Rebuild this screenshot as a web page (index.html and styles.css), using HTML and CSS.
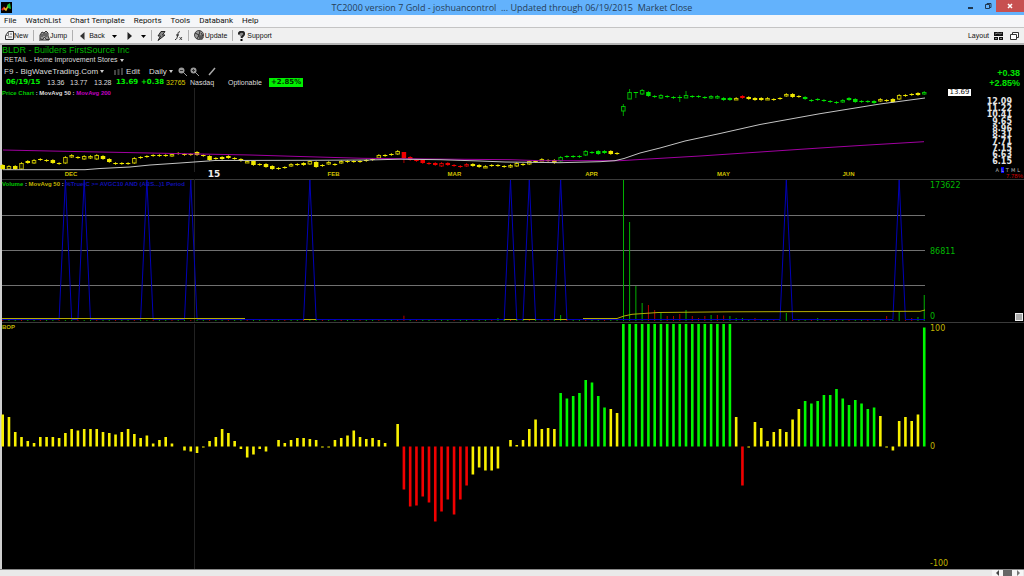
FILE: index.html
```html
<!DOCTYPE html>
<html lang="en">
<head>
<meta charset="utf-8">
<title>TC2000 version 7 Gold</title>
<link rel="stylesheet" href="styles.css">
</head>
<body>
<div class="app">
  <header class="titlebar">
    <svg class="app-icon" viewBox="0 0 11 11"><path fill="#000" d="M0 0h11v11H0z"/><path stroke="#e02020" stroke-width="2" fill="none" d="M1 8l2-2 2 2"/><path stroke="#e0c020" stroke-width="1.5" fill="none" d="M3 6l2 2 2-4"/><path fill="#18c030" d="M6 3l3-2 1 6-3-1z"/></svg>
    <h1 class="title">TC2000 version 7 Gold - joshuancontrol&nbsp; ... Updated through 06/19/2015&nbsp; Market Close</h1>
    <div class="window-buttons">
      <button class="win" aria-label="Minimize"><svg viewBox="0 0 8 8"><path fill="#203850" d="M1 5h5v2H1z"/></svg></button>
      <button class="win" aria-label="Restore"><svg viewBox="0 0 8 8" fill="none" stroke="#203850"><path d="M1.5 2.500h4v4h-4zM3 2.500v-1h4v4H6"/></svg></button>
      <button class="win close" aria-label="Close"><svg viewBox="0 0 8 8"><path stroke="#fff" stroke-width="1.500" d="M2 2l4 4M6 2L2 6"/></svg></button>
    </div>
  </header>
  <nav class="menu">
    <button>File</button><button>WatchList</button><button>Chart Template</button><button>Reports</button><button>Tools</button><button>Databank</button><button>Help</button>
  </nav>
  <div class="toolbar">
    <button class="tool"><svg class="i9" viewBox="0 0 9 10" fill="none" stroke="#333"><path d="M3.500.5h5v8h-8v-4z"/><path d="M3.500.5v4h-3M3 6h4M5 3h2" stroke="#777"/></svg>New</button>
    <i class="sep"></i>
    <button class="tool"><svg class="i11" viewBox="0 0 11 11" fill="none" stroke="#333"><path fill="#999" d="M1 9V5l2-3 2 1 2-2 2 2v3l1.500 3.500H7L5.500 7 4 9.500z"/><path d="M3 4v3M5 3v3M7 3v4M0 10h10"/></svg>Jump</button>
    <i class="sep"></i>
    <button class="tool back"><svg class="i5" viewBox="0 0 5 8"><path d="M4.500 0v8L0 4z" fill="#333"/></svg>Back</button>
    <button class="tool drop" aria-label="Back history"><svg class="i5" viewBox="0 0 5 8"><path d="M0 3h5L2.500 6z"/></svg></button>
    <button class="tool fwd" aria-label="Forward"><svg class="i5" viewBox="0 0 5 8"><path d="M.5 0v8L5 4z" fill="#222"/></svg></button>
    <button class="tool drop2" aria-label="Forward history"><svg class="i5" viewBox="0 0 5 8"><path d="M0 3h5L2.500 6z"/></svg></button>
    <i class="sep"></i>
    <button class="tool" aria-label="Quick alert"><svg class="i9" viewBox="0 0 9 10"><path d="M4 .5h4L5.500 4H8L1 9.500 3.500 5H1z" fill="#888" stroke="#222"/></svg></button>
    <button class="tool fx" aria-label="Formula"><svg class="i9" viewBox="0 0 9 10" fill="none" stroke="#222"><path d="M6 1C4 0 4 3 3.500 5S2.500 9 1 8.500M2 4h3"/><path d="M5.500 6l2.500 3M8 6L5.500 9" stroke-width=".8"/></svg></button>
    <i class="sep"></i>
    <button class="tool"><svg class="i11" viewBox="0 0 11 11"><circle cx="5" cy="5" r="4.500" fill="#999" stroke="#444"/><path d="M1 3l4 2 1-4M5 5L3 9M4 6h5M7 3l2 3" stroke="#333" fill="none"/><path d="M5 6l5 1-2 3-3-1z" fill="#555"/></svg>Update</button>
    <i class="sep"></i>
    <button class="tool"><svg class="i7" viewBox="0 0 7 10"><path d="M1 3.500C0 0 7-.5 6 3.500 5.500 5 4 5 3.500 7" stroke="#222" stroke-width="2" fill="#888"/><path d="M2.500 8h2v2h-2z"/></svg>Support</button>
    <span class="spacer"></span>
    <button class="tool layout">Layout <svg class="i9" viewBox="0 0 9 10"><path fill="#111" d="M0 1h9v4H0zM0 6h4v3H0zM5 6h4v3H5z"/><path stroke="#ccc" stroke-width=".6" d="M1 3l3-1 2 1 2-1M1 7.500h2M6 7.500h2" fill="none"/></svg></button>
    <button class="tool" aria-label="Windows"><svg class="i9" viewBox="0 0 9 10" fill="#fff" stroke="#333"><path d="M2.500 1.500h6v5h-6z"/><path d="M.5 3.500h6v5h-6z"/></svg></button>
  </div>
  <main class="workspace">
    <section class="header">
      <div class="info">
        <h2 class="symbol">BLDR - Builders FirstSource Inc</h2>
        <button class="industry">RETAIL - Home Improvement Stores <span class="caret"></span></button>
        <div class="controls">
          <button>F9 - BigWaveTrading.Com <span class="caret"></span></button>
          <button class="edit"><svg class="i9" viewBox="0 0 9 9"><path d="M0 3h2v5H0zM3.500 2h2v6h-2zM7 1h2v7H7z" fill="#444"/></svg>Edit</button>
          <button class="period">Daily <span class="caret"></span></button>
          <button aria-label="Zoom out"><svg class="i9" viewBox="0 0 9 9"><circle cx="3.500" cy="3.500" r="3" fill="#999"/><path d="M5 5l4 4" stroke="#999"/><path d="M2 3.500h3" stroke="#333"/></svg></button>
          <button class="zoom-in" aria-label="Zoom in"><svg class="i9" viewBox="0 0 9 9"><circle cx="3.500" cy="3.500" r="3" fill="#999"/><path d="M5 5l4 4" stroke="#999"/><path d="M2 3.500h3M3.500 2v3" stroke="#333"/></svg></button>
          <button class="draw" aria-label="Draw line"><svg class="i9" viewBox="0 0 9 9"><path d="M1 8l6-7" stroke="#aaa" stroke-width="1.500"/></svg></button>
        </div>
        <div class="quote">
          <b>06/19/15</b><span>13.36</span><span>13.77</span><span>13.28</span><b>13.69</b><b>+0.38</b><span class="vol">32765</span><span>Nasdaq</span><span>Optionable</span><b class="badge">+2.85%</b>
        </div>
      </div>
      <div class="change"><span>+0.38</span><span>+2.85%</span></div>
    </section>
    <section class="panel price">
      <div class="plot">
        <svg id="price" viewBox="2 88 923 91" preserveAspectRatio="none"></svg>
        <p class="legend"><span class="g">Price Chart</span> : MovAvg 50 : <span class="m">MovAvg 200</span></p>
        <div class="months" id="months"></div>
      </div>
      <div class="axis price-axis">
        <output class="last">13.69</output>
        <ol class="scale"><li>12.09</li><li>11.22</li><li>10.41</li><li>9.65</li><li>8.96</li><li>8.31</li><li>7.71</li><li>7.15</li><li>6.63</li><li>6.15</li></ol>
        <div class="modes"><span>A</span><span class="on">L</span><span>T</span><span>M</span><span>L</span></div>
        <div class="pct">7.78%</div>
      </div>
    </section>
    <section class="panel volume">
      <div class="plot">
        <svg id="volume" viewBox="2 179 923 143" preserveAspectRatio="none"></svg>
        <p class="legend"><span class="g">Volume</span> : <span class="y">MovAvg 50</span> : <span class="b">%True(C &gt;= AVGC10 AND (ABS...)1 Period</span></p>
      </div>
      <div class="axis green"><span>173622</span><span>86811</span><span>0</span><i class="grip"></i></div>
    </section>
    <section class="panel bop">
      <div class="plot">
        <svg id="bop" viewBox="2 322 923 247" preserveAspectRatio="none"></svg>
        <p class="legend"><span class="y">BOP</span></p>
      </div>
      <div class="axis yellow"><span>100</span><span>0</span><span>-100</span></div>
    </section>
  </main>
  <footer class="scrollbar">
    <button aria-label="Scroll left"><svg viewBox="0 0 9 6"><path d="M6 0v6L3 3z" fill="#444"/></svg></button><i class="thumb"></i><button aria-label="Scroll right"><svg viewBox="0 0 9 6"><path d="M4 0v6l3-3z" fill="#777"/></svg></button>
  </footer>
</div>
<script src="charts.js"></script>
</body>
</html>
```
FILE: styles.css
```css
* { box-sizing: border-box; }
body { margin: 0; background: #000; font-family: "Liberation Sans", Arial, sans-serif; }
button { margin: 0; padding: 0; border: 0; background: none; color: inherit; font: inherit; display: flex; align-items: center; white-space: nowrap; }
h1, h2, p, ol { margin: 0; padding: 0; font-weight: normal; list-style: none; }
svg { display: block; }
.app { height: 100vh; display: flex; flex-direction: column; overflow: hidden; }

.titlebar { display: grid; grid-template-columns: 62px 1fr 62px; height: 15px; flex: none; background: #63b2fc; }
.app-icon { width: 11px; height: 11px; margin: 2px 1px; }
.title { font: 9px/15px "Open Sans", sans-serif; color: #263e58; text-align: center; white-space: nowrap; }
.window-buttons { display: flex; height: 12px; }
.win { width: 17px; justify-content: center; }
.win svg { width: 8px; height: 8px; }
.win.close { width: 28px; background: #c75050; }

.menu { display: flex; gap: 9px; padding: 0 4px; height: 13px; flex: none; background: #f5f6f8; border-bottom: 1px solid #c4c4c4; font: 8px/12px Roboto, sans-serif; color: #111; }
.toolbar { display: flex; align-items: center; height: 17px; flex: none; padding: 0 5px; background: #f0f0f0; border-bottom: 2px solid #b4b4b4; font-size: 7px; color: #111; }
.sep { width: 1px; height: 11px; margin: 0 5px; background: #b0b0b0; }
.i5 { width: 5px; height: 8px; }
.i7 { width: 7px; height: 10px; margin-right: 2px; }
.i9 { width: 9px; height: 10px; }
.i11 { width: 11px; height: 11px; }
.back { gap: 4px; margin-left: 2px; }
.drop { margin-left: 7px; }
.fwd { margin-left: 10px; }
.drop2 { margin-left: 9px; }
.fx { margin-left: 8px; }
.spacer { flex: 1; }
.layout { gap: 5px; margin-right: 7px; }

.workspace { flex: 1; min-height: 0; display: flex; flex-direction: column; background: #000; border-left: 2px solid #cfcfcf; }
.header { flex: none; display: flex; justify-content: space-between; color: #ddd; }
.info { height: 43px; }
.symbol { font-size: 9px; line-height: 10px; color: #00b400; white-space: nowrap; }
.industry { font-size: 7px; line-height: 10px; padding-left: 2px; }
.caret { border: 2px solid transparent; border-top: 3px solid #ccc; border-bottom: 0; margin-left: 2px; }
.controls { display: flex; align-items: center; height: 12px; padding-left: 2px; font-size: 8px; }
.controls .i9 { height: 9px; }
.edit { gap: 3px; margin-left: 10px; }
.period { margin: 0 5px 0 9px; }
.zoom-in { margin-left: 3px; }
.draw { margin-left: 9px; }
.quote { display: grid; grid-template-columns: 41px 23px 24px 22px 25px 25px 24px 38px 41px auto; align-items: center; height: 11px; padding-left: 4px; font-size: 7px; line-height: 9px; }
.quote b { color: #00f000; font-family: "DejaVu Sans", sans-serif; }
.quote .vol { color: #d8c800; }
.quote .badge { background: #00f000; color: #003000; padding: 0 2px; }
.change { display: flex; flex-direction: column; align-items: flex-end; padding: 23px 4px 0 0; font: bold 9px/10px "Liberation Sans", sans-serif; color: #00e400; }

.panel { display: grid; grid-template-columns: minmax(0, 1fr) 99px; min-height: 0; }
.price { flex: 91 1 0; }
.volume { flex: 143 1 0; }
.bop { flex: 247 1 0; }
.plot { position: relative; min-height: 0; }
.plot svg { width: 100%; height: 100%; overflow: visible; position: absolute; }
.volume, .bop { box-shadow: inset 0 1px #3a3a3a; }
.legend { position: absolute; left: 0; top: 1px; font: bold 6px/8px "Liberation Sans", sans-serif; color: #ddd; white-space: nowrap; }
.g { color: #00c800; }
.m { color: #c000c0; }
.y { color: #c0b400; }
.b { color: #1010b4; }
.months span { position: absolute; bottom: 1px; font: bold 6px/8px "Liberation Sans", sans-serif; color: #d0c000; transform: translateX(-50%); }
.months .year { color: #eee; font: bold 9px/8px "DejaVu Sans", sans-serif; }
.axis { min-height: 0; display: flex; flex-direction: column; justify-content: space-between; padding: 2px 0 0 5px; font: 8px/10px "DejaVu Sans", sans-serif; position: relative; }
.price-axis { padding: 1px 1px 0 23px; justify-content: flex-start; }
.last { width: 23px; background: #fff; color: #111; font: 7px/7px "DejaVu Sans", sans-serif; text-align: center; }
.scale { flex: 1; display: flex; flex-direction: column; justify-content: space-between; padding: 3px 11px 2px 0; font: bold 8px/6px "DejaVu Sans", sans-serif; color: #e4e4e4; text-align: right; }
.modes { display: flex; justify-content: flex-end; gap: 2px; padding-right: 3px; font: 5px/6px "DejaVu Sans", sans-serif; color: #bbb; }
.modes .on { background: #00f; }
.pct { font: 6px/6px "Liberation Sans", sans-serif; color: #d00000; text-align: right; }
.green { color: #00b800; }
.yellow { color: #c0b400; }
.grip { position: absolute; right: 1px; bottom: 1px; width: 8px; height: 8px; background: #aaa; border: 1px solid #eee; }
.scrollbar { display: flex; justify-content: flex-end; flex: none; height: 7px; padding-right: 1px; background: #e9e9e9; border-top: 1px solid #888; }
.scrollbar button { width: 11px; background: #f6f6f6; justify-content: center; }
.scrollbar svg { width: 9px; height: 6px; }
.thumb { width: 9px; background: #666; }
```
FILE: charts.js
```js
const STEP = 6.269, FIRST = 2.7;
const x = n => FIRST + STEP * n;
const COLORS = { y: '#f0e800', r: '#f00000', g: '#00e000' };
const rect = (cx, top, w, h, fill, extra = '') =>
  `<rect x="${cx - w / 2}" y="${top}" width="${w}" height="${h}" fill="${fill}" ${extra}/>`;
const line = (points, color, width = 1) =>
  `<polyline points="${points}" fill="none" stroke="${color}" stroke-width="${width}"/>`;
const yearLine = (a, b) => line(`194.500,${a} 194.500,${b}`, '#222');

// One entry per day: body kind (f filled, h hollow, d doji), top and bottom
const candles = `f165-169 h166-169 f166-169 h163-169 f161-163 h160-163 d159 d160 f160-163 d163
h157-163 h155-157 d157 h156-159 h156-158 h155-159 f156-159 f159-162 d163 d163
d163 h158-163 d157 d156 f155-156 f155-156 f155-156 h154-156 d153 d154
d154 f152-155 d155 f156-160 d158 f157-159 f156-158 d158 f159-161 h161-162
f161-165 d164 f164-167 f166-169 d168 d167 h164-166 d164 f163-165 h161-164
f162-167 d165 h162-164 d164 h161-163 d161 d161 d161 d160 d159
h155-158 d155 d154 h151-154 f152-158 f157-160 d160 f160-163 d163 f163-165
h163-166 f163-165 d165 d166 h164-166 f164-166 f165-167 h166-167 d165 d165
f166-167 h165-167 h163-166 d164 h161-164 d161 h159-160 d160 f160-163 h157-161
d156 d156 d156 h151-155 d152 f151-154 f151-153 f151-154 d153 h106-111
h92-99 f92-93 h90-94 f92-96 f96-97 h95-98 d96 d97 d97 h95-98
d96 f96-97 d97 h96-98 h96-98 f98-100 f98-100 h98-99 f96-98 f97-99
f98-100 f98-100 h98-99 d99 f98-99 h94-96 f94-97 f96-97 f97-99 d100
d99 d100 f101-102 d102 h100-102 f98-100 f99-102 d101 d101 f101-103
h99-101 d100 f99-102 h95-99 f95-96 d94 f93-95 h92-94`.split(/\s+/);
const candleColor = n =>
  (n >= 64 && n <= 74) || n === 118 ? 'r'
  : (n >= 89 && n <= 96) || (n >= 99 && n <= 116) || (n >= 128 && n <= 139) || n === 147 ? 'g' : 'y';
const longWicks = { 64: [152, 163], 99: [104, 116], 100: [89, 99], 101: [92, 98], 108: [95, 102], 109: [91, 98] };

let price = yearLine(88, 172);
candles.forEach((code, n) => {
  const color = COLORS[candleColor(n)];
  const [top, bottom] = code.slice(1).split('-').map(Number);
  const end = bottom || top + 1;
  const [a, b] = longWicks[n] || [top - 1, end + 1];
  price += rect(x(n), a, 1, b - a, color, 'opacity=".7"');
  if (code[0] === 'h') price += rect(x(n), top + 0.5, 3.5, Math.max(end - top - 0.5, 1.5), '#000', `stroke="${color}" opacity=".8"`);
  else price += rect(x(n), top, 4.5, end - top, color);
});
price += line('3,150 50,151 100,152 150,153 200,154 250,155 300,156.5 363,158.3 430,159 510,159.7 540,160.7 620,160.7 640,159.5 700,156 760,152 820,148 860,145.5 924,141.7', '#a000a0');
price += line('3,169.7 85,169.7 100,168.5 130,167 150,165 180,163 215,160.5 310,160.3 368,160 400,159.2 440,159.7 480,161 505,162 560,162.7 600,161.7 615,160.7 624,158.5 640,153 660,148 685,141 720,133.5 760,124.5 820,113.7 880,104 925,98', '#c4c4c4');
document.getElementById('price').innerHTML = price;

const months = [['DEC', 71], ['15', 214], ['FEB', 333.5], ['MAR', 454.5], ['APR', 591.5], ['MAY', 723.5], ['JUN', 848.5]];
document.getElementById('months').innerHTML = months.map(([name, at]) =>
  `<span class="${name === '15' ? 'year' : ''}" style="left:${((at - 2) / 923 * 100).toFixed(2)}%">${name}</span>`).join('');

let volume = yearLine(179, 322);
[215.5, 250.5, 285.5].forEach(y => { volume += line(`2,${y} 925,${y}`, '#707070'); });
const tops = { 64: 315.7, 79: 318, 89: 315, 99: 180, 100: 222, 101: 286, 102: 303, 103: 305, 104: 310, 105: 313, 106: 316, 107: 316, 108: 314, 109: 310, 110: 316, 111: 318, 112: 316, 113: 315, 114: 315, 115: 315.5, 116: 316, 117: 318, 118: 318, 120: 318, 125: 313, 130: 318, 141: 316, 143: 312, 145: 318, 146: 317, 147: 295 };
const redDays = [64, 103, 104, 106, 107, 108, 110, 111, 112, 114, 115, 120, 141, 145];
for (let n = 0; n < 148; n++) {
  const top = tops[n] || 320;
  const red = tops[n] ? redDays.includes(n) : n % 3 === 0;
  volume += rect(n === 99 ? 623.5 : x(n), top, 1, 321 - top, red ? '#b40000' : '#00b000');
}
const signals = [10, 13, 23, 30, 49, 81, 84, 89, 125, 143];
let path = '2,319.500';
signals.forEach(n => { path += ` ${x(n - 1)},319.5 ${x(n)},180 ${x(n + 1)},319.5`; });
volume += line(path + ' 925,319.5', '#0000b8');
volume += line('2,318.5 245,318.5', '#b4ac00');
volume += line('583,318.5 617,318.5 624,316 632,314.3 658,312.5 730,311.8 920,311.3 925,310', '#b4ac00');
[49, 81, 84, 89].forEach(n => { volume += line(`${x(n - 1)},319.5 ${x(n + 1)},319.5`, '#b4ac00'); });
document.getElementById('volume').innerHTML = volume;

// Balance of power, as bar heights; F marks a bar that runs to the top edge
const F = 122.5;
const bop = [32, 29.5, 14.5, 9.5, 5.5, 3.5, 9.5, 9.5, 9.5, 8.5, 13.5, 17.5, 16, 17.5, 17.5, 17.5, 14.5, 13.5, 12, 14.5,
  17.5, 12.5, 8.5, 11, 3, 6.5, 9.5, 3, 0, -4, -5, -6.5, -1, 5.5, 9.5, 17.5, 13.5, 5.5, -2.5, -11,
  -8, -2.5, -5, 0, 6.5, 3.5, 6.5, 8.5, 8.5, 7.5, 6.5, -1, -1, 6.5, 8.5, 11, 16, 9.5, 7.5, 8.5,
  6.5, 3.5, 0, 22.5, -43, -60, -59, -50, -56, -75, -65, -53, -68, -53, -39, -28, -21, -24, -24, -22,
  0, 6.5, 1.5, 6.5, 17.5, 27, 17.5, 18.5, 17.5, 53.5, 48, 50.5, 53.5, 66.5, 64, 50.5, 39, 37.5, 33.5,
  ...Array(18).fill(F), 29.5, -39, -1, 24.5, 18.5, 5.5, 14.5, 17.5, 14.5, 27, 37.5, 45.5, 43, 45.5, 51.5, 51.5, 57.5,
  48, 41.5, 46.5, 43, 37.5, 39, 30.5, -1, -4, 25.5, 29.5, 25.5, 32, 119];
let bars = yearLine(324, 569);
bop.forEach((v, n) => {
  const color = v > 38 ? '#00f800' : v < -38 ? '#f00000' : n === 138 ? '#00f800' : '#f8f000';
  bars += rect(x(n), v > 0 ? 446.5 - v : 446.5, 2.6, Math.abs(v), color);
});
document.getElementById('bop').innerHTML = bars;
```
